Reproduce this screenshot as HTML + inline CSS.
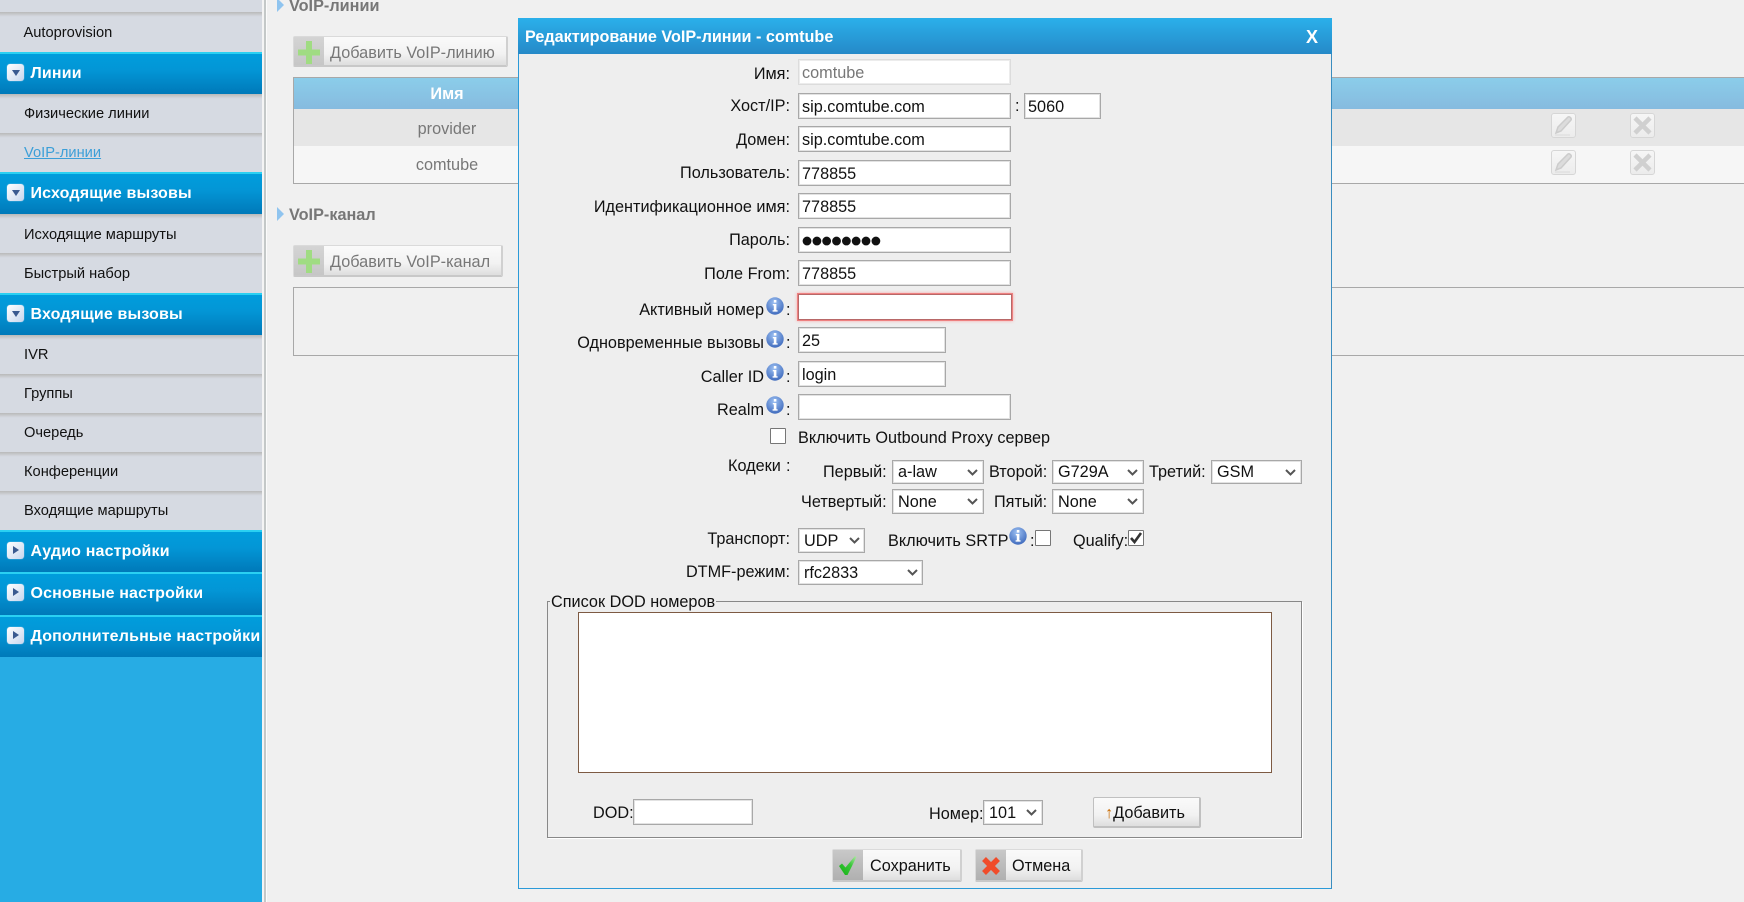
<!DOCTYPE html>
<html lang="ru"><head><meta charset="utf-8"><title>VoIP</title>
<style>
html,body{margin:0;padding:0;width:1744px;height:902px;overflow:hidden;background:#f0f0f0;font-family:"Liberation Sans",Arial,sans-serif;color:#111}
*{box-sizing:border-box}
.a,.t,.l,input,select,svg.i{position:absolute}
.t{white-space:nowrap;line-height:20px;font-size:16.25px}
.l{left:0;width:790px;text-align:right;white-space:nowrap;line-height:20px;font-size:16.25px}
.lo{width:764px}
.c{left:786px;position:absolute;line-height:20px;font-size:16.25px}
.it{position:absolute;left:0;width:262px;background:linear-gradient(#b9b9b9,#c6c8ca 2px,#d3d6dd 4px,#d6dae2 5px)}
.it span{position:absolute;left:24px;font-size:14.66px;line-height:20px;white-space:nowrap;color:#111}
.h{position:absolute;left:0;width:262px;background:linear-gradient(#009ddc 0,#0396d6 40%,#0079b9 100%);border-top:2px solid #2ad0f2}
.h span{position:absolute;left:30.5px;top:10px;font-size:16px;font-weight:bold;color:#fff;line-height:20px;white-space:nowrap;letter-spacing:.16px}
.h i{position:absolute;left:7px;top:10px;width:17px;height:17px;border-radius:3px;background:linear-gradient(135deg,#fff,#c6d6ee);box-shadow:0 0 1px #cfe4f4}
.h i:after{content:"";position:absolute}
.d i:after{left:4.5px;top:6px;border-left:4.5px solid transparent;border-right:4.5px solid transparent;border-top:6.5px solid #3a5a90}
.r i:after{left:6px;top:4px;border-top:4.5px solid transparent;border-bottom:4.5px solid transparent;border-left:6.5px solid #3a5a90}
input,select{margin:0;border:1px solid #a8a8a8;box-shadow:inset 0 0 0 1px #e2e2e2;background:#fff;font:16.25px "Liberation Sans",Arial,sans-serif;color:#111;padding:3px 3px 0;border-radius:0;outline:0}
select{appearance:none;-webkit-appearance:none;padding:0 0 0 5px}
input[type=checkbox]{width:16px;height:16px;border:1px solid #767676;box-shadow:none;appearance:none;-webkit-appearance:none;padding:0;border-radius:1px}
.gb{position:absolute;border:1px solid #dadada;border-bottom:2px solid #c8c8c8;border-right:2px solid #d0d0d0;border-radius:2px;background:linear-gradient(#fafafa,#f2f2f2 60%,#dedede);font-size:16.25px;line-height:28px;white-space:nowrap}
.gb b{position:absolute;left:0;top:0;bottom:0;background:linear-gradient(#d4d4d4,#c6c6c6);font-weight:normal}
.gb>span{position:absolute;top:2px}
.ti{position:absolute;border:1px solid #d6d6d6;border-radius:3px;background:linear-gradient(#f6f6f6,#ececec)}
</style></head><body>
<svg width="0" height="0" style="position:absolute"><defs>
<radialGradient id="ig" cx=".45" cy=".3" r=".75"><stop offset="0" stop-color="#9cc0f2"/><stop offset="1" stop-color="#3a66ba"/></radialGradient>
<linearGradient id="cg" x1="0" y1="1" x2="1" y2="0"><stop offset="0" stop-color="#12b012"/><stop offset=".6" stop-color="#3cc83c"/><stop offset="1" stop-color="#b4e8a8"/></linearGradient>
<symbol id="inf" viewBox="0 0 18 18"><circle cx="9" cy="9" r="8.7" fill="url(#ig)"/><rect x="7.8" y="3" width="2.6" height="2.6" fill="#fff"/><path d="M6.8 7h3.6v6.2h1.2v1.4H6.6v-1.4h1.2V8.4h-1z" fill="#fff"/></symbol>
<symbol id="chev" viewBox="0 0 11 7"><path d="M1 1l4.5 4.5L10 1" fill="none" stroke="#555" stroke-width="2"/></symbol>
<symbol id="plus" viewBox="0 0 22 23"><path d="M8 0h6v8.500h8v6h-8V23H8v-8.500H0v-6h8z" fill="#a0dc82"/></symbol>
<symbol id="pen" viewBox="0 0 25 25"><path d="M5 20l2-6L17 4c1.500-1 4 1.500 3 3L10 18z" fill="#dcdcdc" stroke="#cccccc" stroke-width="1.500"/><path d="M4 22h15" stroke="#dadada"/></symbol>
<symbol id="del" viewBox="0 0 25 25"><path d="M5 5l15 15M20 5L5 20" stroke="#d0d0d0" stroke-width="4.500"/></symbol>
</defs></svg>

<!-- sidebar -->
<div class="a" style="left:0;top:0;width:262px;height:902px;background:#27ace4"></div>
<div class="a" style="left:262px;top:0;width:2px;height:902px;background:#f4f4f4"></div>
<div class="a" style="left:264px;top:0;width:2px;height:902px;background:#c4c8c8"></div>
<div class="a" style="left:266px;top:0;width:1px;height:902px;background:#fbfbfb"></div>

<div class="it" style="top:0;height:13px;background:#d6dae2"></div>
<div class="it" style="top:12px;height:40px"><span style="top:11px;left:23.5px">Autoprovision</span></div>
<div class="h d" style="top:52px;height:42px"><i></i><span>Линии</span></div>
<div class="it" style="top:94px;height:39px"><span style="top:10px">Физические линии</span></div>
<div class="it" style="top:133px;height:39px"><span style="top:10px;color:#3c9fd8;text-decoration:underline">VoIP-линии</span></div>
<div class="h d" style="top:172px;height:42px"><i></i><span>Исходящие вызовы</span></div>
<div class="it" style="top:214px;height:39px"><span style="top:11px">Исходящие маршруты</span></div>
<div class="it" style="top:253px;height:40px"><span style="top:11px">Быстрый набор</span></div>
<div class="h d" style="top:293px;height:42px"><i></i><span>Входящие вызовы</span></div>
<div class="it" style="top:335px;height:39px"><span style="top:10px">IVR</span></div>
<div class="it" style="top:374px;height:39px"><span style="top:10px">Группы</span></div>
<div class="it" style="top:413px;height:39px"><span style="top:10px">Очередь</span></div>
<div class="it" style="top:452px;height:39px"><span style="top:10px">Конференции</span></div>
<div class="it" style="top:491px;height:39px"><span style="top:10px">Входящие маршруты</span></div>
<div class="h r" style="top:530px;height:42px"><i></i><span>Аудио настройки</span></div>
<div class="h r" style="top:572px;height:43px"><i></i><span>Основные настройки</span></div>
<div class="h r" style="top:615px;height:42px"><i></i><span>Дополнительные настройки</span></div>

<!-- background content -->
<div class="a" style="left:277px;top:-2px;border-top:7px solid transparent;border-bottom:7px solid transparent;border-left:7px solid #8fc4ef"></div>
<div class="t" style="left:289px;top:-4px;font-weight:bold;color:#777">VoIP-линии</div>
<div class="gb" style="left:293px;top:36px;width:215px;height:31px;color:#777"><b style="width:30px"></b><svg class="i" style="left:4px;top:4px" width="22" height="23"><use href="#plus"/></svg><span style="left:36px">Добавить VoIP-линию</span></div>

<div class="a" style="left:293px;top:77px;width:1451px;height:107px;border:1px solid #a8a8a8;border-width:1px 0 1px 1px;background:#f6f6f6"></div>
<div class="a" style="left:294px;top:78px;width:1450px;height:31px;background:linear-gradient(#8bcdea,#86bbdf)"></div>
<div class="a" style="left:294px;top:109px;width:1450px;height:37px;background:#e6e6e6"></div>
<div class="t" style="left:294px;width:306px;text-align:center;top:84px;font-weight:bold;color:#fff">Имя</div>
<div class="t" style="left:294px;width:306px;text-align:center;top:119px;color:#777">provider</div>
<div class="t" style="left:294px;width:306px;text-align:center;top:155px;color:#777">comtube</div>
<div class="ti" style="left:1551px;top:113px;width:25px;height:25px"><svg class="i" style="left:-1px;top:-1px" width="25" height="25"><use href="#pen"/></svg></div>
<div class="ti" style="left:1630px;top:113px;width:25px;height:25px"><svg class="i" style="left:-1px;top:-1px" width="25" height="25"><use href="#del"/></svg></div>
<div class="ti" style="left:1551px;top:150px;width:25px;height:25px"><svg class="i" style="left:-1px;top:-1px" width="25" height="25"><use href="#pen"/></svg></div>
<div class="ti" style="left:1630px;top:150px;width:25px;height:25px"><svg class="i" style="left:-1px;top:-1px" width="25" height="25"><use href="#del"/></svg></div>

<div class="a" style="left:277px;top:207px;border-top:7px solid transparent;border-bottom:7px solid transparent;border-left:7px solid #8fc4ef"></div>
<div class="t" style="left:289px;top:205px;font-weight:bold;color:#777">VoIP-канал</div>
<div class="gb" style="left:293px;top:245px;width:210px;height:32px;color:#777"><b style="width:30px"></b><svg class="i" style="left:4px;top:4px" width="22" height="23"><use href="#plus"/></svg><span style="left:36px">Добавить VoIP-канал</span></div>
<div class="a" style="left:293px;top:287px;width:1451px;height:69px;border:1px solid #a8a8a8;border-right:0"></div>

<!-- dialog -->
<div class="a" style="left:518px;top:18px;width:814px;height:871px;background:#eeeeee;border:1px solid #2b9ad8;border-right-color:#3a8dbf"></div>
<div class="a" style="left:518px;top:18px;width:814px;height:36px;background:linear-gradient(#2bb0ea,#2589c8)"></div>
<div class="t" style="left:525px;top:27px;font-weight:bold;color:#fff;font-size:16.2px">Редактирование VoIP-линии - comtube</div>
<div class="t" style="left:1306px;top:27px;font-weight:bold;color:#fff;font-size:18px">X</div>

<div class="l" style="top:64px">Имя:</div>
<input style="left:798px;top:59px;width:213px;height:26px;color:#777;border-color:#dcdcdc;box-shadow:inset 0 0 0 1px #ececec" value="comtube">
<div class="l" style="top:96px">Хост/IP:</div>
<input style="left:798px;top:93px;width:213px;height:26px" value="sip.comtube.com">
<div class="t" style="left:1015px;top:96px">:</div>
<input style="left:1024px;top:93px;width:77px;height:26px" value="5060">
<div class="l" style="top:130px">Домен:</div>
<input style="left:798px;top:126px;width:213px;height:26px" value="sip.comtube.com">
<div class="l" style="top:163px">Пользователь:</div>
<input style="left:798px;top:160px;width:213px;height:26px" value="778855">
<div class="l" style="top:197px">Идентификационное имя:</div>
<input style="left:798px;top:193px;width:213px;height:26px" value="778855">
<div class="l" style="top:230px">Пароль:</div>
<input style="left:798px;top:227px;width:213px;height:26px;padding-top:0;font-family:'DejaVu Sans',sans-serif;font-size:11.5px;letter-spacing:-.2px" value="●●●●●●●●">
<div class="l" style="top:264px">Поле From:</div>
<input style="left:798px;top:260px;width:213px;height:26px" value="778855">

<div class="l lo" style="top:300px">Активный номер</div>
<svg class="i" style="left:766px;top:297px" width="18" height="18"><use href="#inf"/></svg><div class="c" style="top:300px">:</div>
<input style="left:798px;top:294px;width:214px;height:26px;border:1px solid #b86868;box-shadow:0 0 0 1px #ee8080,0 0 3px 1px #f8a8a8">
<div class="l lo" style="top:333px">Одновременные вызовы</div>
<svg class="i" style="left:766px;top:330px" width="18" height="18"><use href="#inf"/></svg><div class="c" style="top:333px">:</div>
<input style="left:798px;top:327px;width:148px;height:26px" value="25">
<div class="l lo" style="top:367px">Caller ID</div>
<svg class="i" style="left:766px;top:363px" width="18" height="18"><use href="#inf"/></svg><div class="c" style="top:367px">:</div>
<input style="left:798px;top:361px;width:148px;height:26px" value="login">
<div class="l lo" style="top:400px">Realm</div>
<svg class="i" style="left:766px;top:396px" width="18" height="18"><use href="#inf"/></svg><div class="c" style="top:400px">:</div>
<input style="left:798px;top:394px;width:213px;height:26px">

<input type="checkbox" style="left:770px;top:428px">
<div class="t" style="left:798px;top:428px">Включить Outbound Proxy сервер</div>
<div class="t" style="left:728px;top:456px">Кодеки</div><div class="t" style="left:786px;top:456px">:</div>

<div class="t" style="left:823px;top:462px">Первый:</div>
<select style="left:892px;top:460px;width:92px;height:24px"><option>a-law</option></select><svg class="i" style="left:967px;top:469px" width="11" height="7"><use href="#chev"/></svg>
<div class="t" style="left:989px;top:462px">Второй:</div>
<select style="left:1052px;top:460px;width:92px;height:24px"><option>G729A</option></select><svg class="i" style="left:1127px;top:469px" width="11" height="7"><use href="#chev"/></svg>
<div class="t" style="left:1149px;top:462px">Третий:</div>
<select style="left:1211px;top:460px;width:91px;height:24px"><option>GSM</option></select><svg class="i" style="left:1285px;top:469px" width="11" height="7"><use href="#chev"/></svg>
<div class="t" style="left:801px;top:492px">Четвертый:</div>
<select style="left:892px;top:489px;width:92px;height:25px"><option>None</option></select><svg class="i" style="left:967px;top:498px" width="11" height="7"><use href="#chev"/></svg>
<div class="t" style="left:994px;top:492px">Пятый:</div>
<select style="left:1052px;top:489px;width:92px;height:25px"><option>None</option></select><svg class="i" style="left:1127px;top:498px" width="11" height="7"><use href="#chev"/></svg>

<div class="l" style="top:529px">Транспорт:</div>
<select style="left:798px;top:528px;width:67px;height:25px"><option>UDP</option></select><svg class="i" style="left:849px;top:537px" width="11" height="7"><use href="#chev"/></svg>
<div class="t" style="left:888px;top:531px">Включить SRTP</div>
<svg class="i" style="left:1009px;top:527px" width="18" height="18"><use href="#inf"/></svg>
<div class="t" style="left:1030px;top:531px">:</div>
<input type="checkbox" style="left:1035px;top:530px">
<div class="t" style="left:1073px;top:531px">Qualify:</div>
<input type="checkbox" style="left:1128px;top:530px">
<svg class="i" style="left:1129px;top:531px" width="14" height="14"><path d="M2 7l3.5 4L12 2" fill="none" stroke="#333" stroke-width="2.6"/></svg>
<div class="l" style="top:562px">DTMF-режим:</div>
<select style="left:798px;top:560px;width:125px;height:25px"><option>rfc2833</option></select><svg class="i" style="left:907px;top:569px" width="11" height="7"><use href="#chev"/></svg>

<div class="a" style="left:547px;top:601px;width:755px;height:237px;border:1px solid #888;box-shadow:1px 1px 0 #fff"></div>
<div class="t" style="left:550px;top:594px;background:#eee;padding:0 1px;line-height:16px">Список DOD номеров</div>
<div class="a" style="left:578px;top:612px;width:694px;height:161px;background:#fff;border:1px solid #7d5a43"></div>
<div class="t" style="left:593px;top:803px">DOD:</div>
<input style="left:633px;top:799px;width:120px;height:26px">
<div class="t" style="left:929px;top:804px">Номер:</div>
<select style="left:983px;top:800px;width:60px;height:25px"><option>101</option></select><svg class="i" style="left:1026px;top:809px" width="11" height="7"><use href="#chev"/></svg>
<div class="gb" style="left:1093px;top:797px;width:108px;height:31px;border-color:#c0c0c0"><span style="left:11px;top:1px"><span style="color:#c86a00">↑</span>Добавить</span></div>

<div class="gb" style="left:832px;top:849px;width:130px;height:33px"><b style="width:30px;background:linear-gradient(#c8c8c8,#b0b0b0)"></b>
<svg class="i" style="left:5px;top:5px" width="20" height="21" viewBox="0 0 20 21"><path d="M1 11l3-2.500 3.500 4L17 1l1.500 1L9.500 20H7z" fill="url(#cg)"/></svg><span style="left:37px">Сохранить</span></div>
<div class="gb" style="left:975px;top:849px;width:108px;height:33px"><b style="width:30px;background:linear-gradient(#c8c8c8,#b0b0b0)"></b>
<svg class="i" style="left:5px;top:6px" width="20" height="20" viewBox="0 0 20 20"><path d="M3 3l14 14M17 3L3 17" stroke="#f04c2a" stroke-width="5.500"/></svg><span style="left:36px">Отмена</span></div>
</body></html>
